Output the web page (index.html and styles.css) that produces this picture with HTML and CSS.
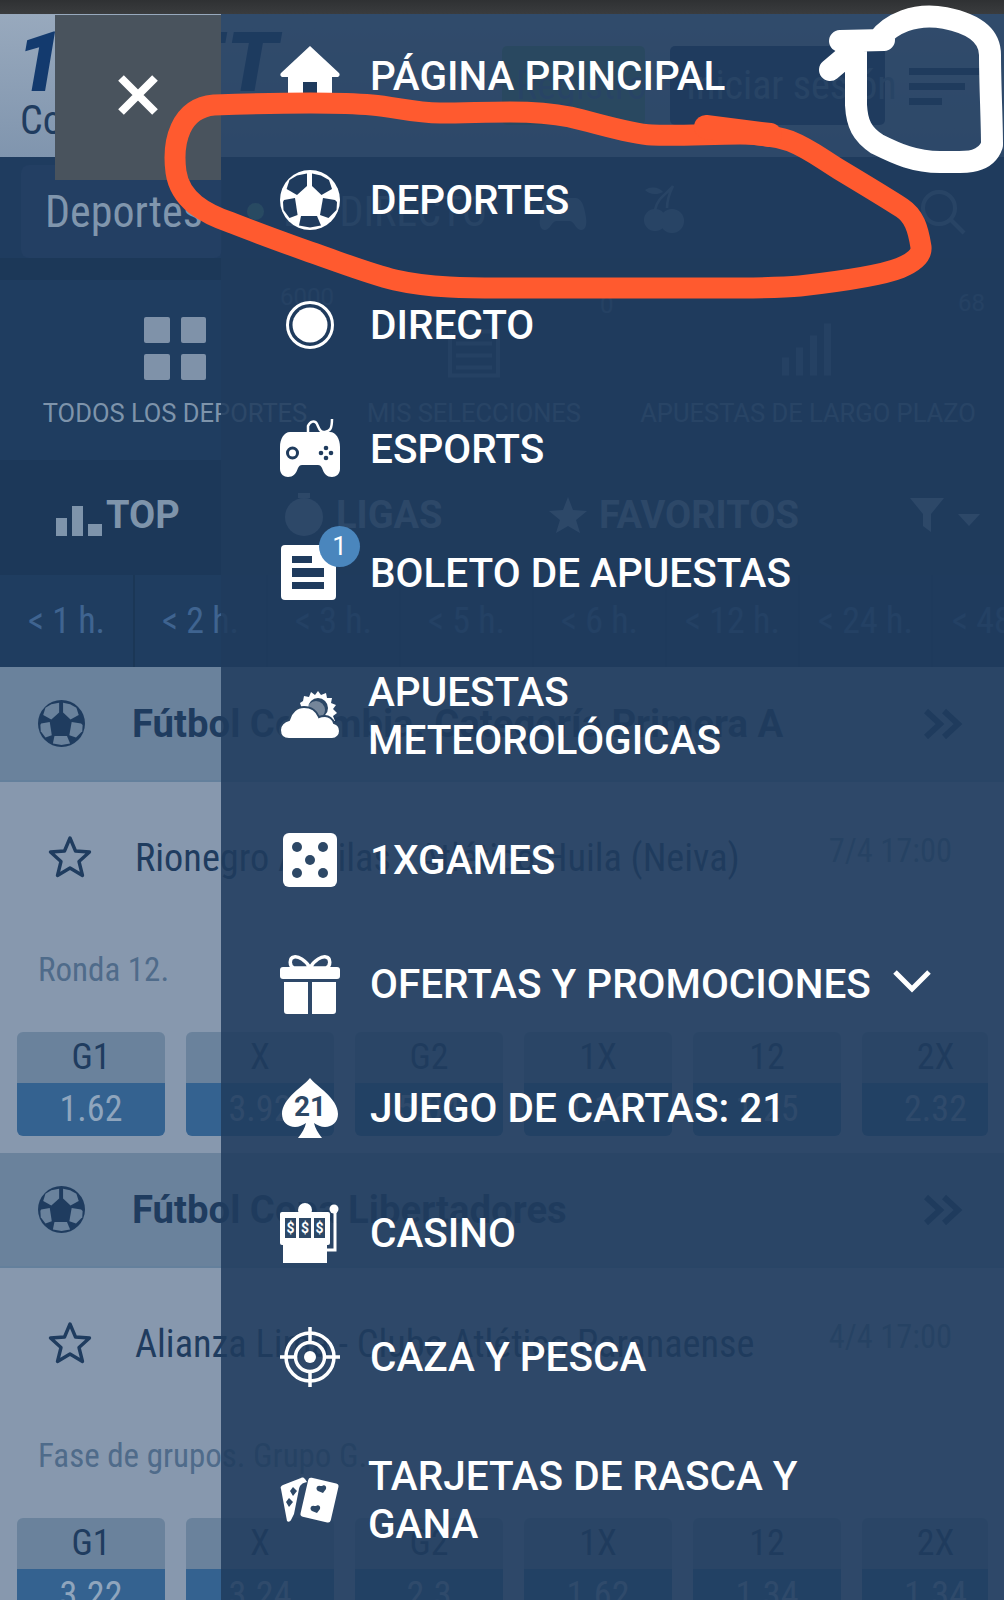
FILE: index.html
```html
<!DOCTYPE html>
<html lang="es">
<head>
<meta charset="utf-8">
<title>1XBET</title>
<link rel="stylesheet" href="styles.css">
</head>
<body>
<svg class="defs" width="0" height="0" aria-hidden="true">
  <symbol id="ball" viewBox="0 0 60 60">
    <circle cx="30" cy="30" r="30" fill="currentColor"/>
    <g class="patch">
      <polygon points="27,3.500 27,16 17,25 6.600,19 9.500,10 17,5.500"/>
      <polygon points="32,3.500 32,16 41.500,25 52,19 49,10 41,5.500"/>
      <polygon points="4,30 15,28 17.600,45 9.500,48 3.500,40 3,32"/>
      <polygon points="55,30 43,28 40,45 48.500,48 56.500,40 57,32"/>
      <polygon points="21,46 37,46 41,55.500 30,57.500 19,55.500"/>
    </g>
  </symbol>
  <symbol id="star" viewBox="0 0 46 44">
    <polygon points="23,3 28.5,16 42.5,17 32,26.5 35.5,40.5 23,33 10.5,40.5 14,26.5 3.5,17 17.5,16" fill="none" stroke="currentColor" stroke-width="3.4" stroke-linejoin="round"/>
  </symbol>
  <symbol id="dbl" viewBox="0 0 40 32">
    <path d="M3 3l14 13L3 29M21 3l14 13-14 13" fill="none" stroke="currentColor" stroke-width="6"/>
  </symbol>
</svg>

<div class="status"></div>

<header class="head">
  <div class="brand">
    <div class="logo">1XBET</div>
    <div class="country cond">Colombia</div>
  </div>
  <div class="btn reg cond">Registro</div>
  <div class="btn login cond">Iniciar sesión</div>
  <div class="burger"><i class="l1"></i><i class="l2"></i><i class="l3"></i></div>
</header>

<nav class="nav">
  <div class="dep cond">Deportes</div>
  <div class="live"><i class="dot"></i><span class="cond">EN DIRECTO</span></div>
  <svg class="n-game" viewBox="0 0 48 36"><path d="M12 2h24c6 0 9 6 11 20 1 8-1 12-5 12-5 0-7-9-11-9H17c-4 0-6 9-11 9-4 0-6-4-5-12C3 8 6 2 12 2z" fill="#5f7a98"/></svg>
  <svg class="n-cherry" viewBox="0 0 42 50"><path d="M30 2C26 10 24 16 24 24M30 2C24 10 14 14 12 26" fill="none" stroke="#5f7a98" stroke-width="2.5"/><path d="M2 6c6-4 14-3 18 2-6 3-13 3-18-2z" fill="#5f7a98"/><circle cx="12" cy="36" r="11" fill="#5f7a98"/><circle cx="29" cy="37" r="12" fill="#5f7a98"/></svg>
  <svg class="n-search" viewBox="0 0 46 46"><circle cx="19" cy="19" r="16" fill="none" stroke="#5f7a98" stroke-width="4"/><path d="M30 30l14 14" stroke="#5f7a98" stroke-width="4"/></svg>
</nav>

<section class="cats">
  <div class="cat c1">
    <div class="grid4"><i></i><i></i><i></i><i></i></div>
    <div class="cat-l">TODOS LOS DEPORTES</div>
    <span class="count n1">6000</span>
  </div>
  <div class="cat c2">
    <svg class="cat-i" viewBox="0 0 60 62"><path d="M6 58V14h48v44zM12 26h36M12 38h36M12 50h36" fill="none" stroke="#4a6685" stroke-width="4"/></svg>
    <div class="cat-l dim">MIS SELECCIONES</div>
    <span class="count n2">0</span>
  </div>
  <div class="cat c3">
    <svg class="cat-i" viewBox="0 0 60 62"><path d="M4 58V40h7v18zM18 58V30h7v28zM32 58V18h7v40zM46 58V6h7v52z" fill="#4a6685"/></svg>
    <div class="cat-l dim">APUESTAS DE LARGO PLAZO</div>
    <span class="count n3">68</span>
  </div>
</section>

<section class="tabs">
  <div class="tab t-top">
    <svg class="bars" viewBox="0 0 46 30"><path d="M0 30V12h11v18zM16 30V0h11v30zM32 30V18h14v12z" fill="currentColor"/></svg>TOP
  </div>
  <div class="tab t-lig">
    <svg class="watch" viewBox="0 0 42 44"><circle cx="21" cy="24" r="19" fill="currentColor"/><rect x="15" y="0" width="12" height="5" fill="currentColor"/></svg>LIGAS
  </div>
  <div class="tab t-fav">
    <svg class="fstar" viewBox="0 0 38 36"><polygon points="19,0 24,13 38,14 27,23 31,36 19,29 7,36 11,23 0,14 14,13" fill="currentColor"/></svg>FAVORITOS
  </div>
  <div class="tab t-fil">
    <svg class="funnel" viewBox="0 0 34 34"><path d="M0 0h34L21 16v18l-8-6V16z" fill="currentColor"/></svg>
    <svg class="caret" viewBox="0 0 22 12"><path d="M0 0h22L11 12z" fill="currentColor"/></svg>
  </div>
</section>

<section class="times cond">
  <div class="time">&lt; 1 h.</div><div class="time">&lt; 2 h.</div><div class="time">&lt; 3 h.</div><div class="time">&lt; 5 h.</div><div class="time">&lt; 6 h.</div><div class="time">&lt; 12 h.</div><div class="time">&lt; 24 h.</div><div class="time">&lt; 48 h.</div>
</section>

<section class="league">
  <svg class="l-ball"><use href="#ball"/></svg>
  <div class="l-name">Fútbol Colombia. Categoría Primera A</div>
  <svg class="l-dbl"><use href="#dbl"/></svg>
</section>
<section class="match">
  <div class="m-top">
    <svg class="m-star"><use href="#star"/></svg>
    <div class="m-name cond">Rionegro Águilas - Atlético Huila (Neiva)</div>
    <div class="m-date cond">7/4 17:00</div>
  </div>
  <div class="m-round cond">Ronda 12.</div>
  <div class="odds cond">
    <div class="odd"><b>G1</b><span>1.62</span></div>
    <div class="odd"><b>X</b><span>3.92</span></div>
    <div class="odd"><b>G2</b><span>5.04</span></div>
    <div class="odd"><b>1X</b><span>1.16</span></div>
    <div class="odd"><b>12</b><span>1.25</span></div>
    <div class="odd"><b>2X</b><span>2.32</span></div>
  </div>
</section>

<section class="league">
  <svg class="l-ball"><use href="#ball"/></svg>
  <div class="l-name">Fútbol Copa Libertadores</div>
  <svg class="l-dbl"><use href="#dbl"/></svg>
</section>
<section class="match">
  <div class="m-top">
    <svg class="m-star"><use href="#star"/></svg>
    <div class="m-name cond">Alianza Lima - Clube Atlético Paranaense</div>
    <div class="m-date cond">4/4 17:00</div>
  </div>
  <div class="m-round cond">Fase de grupos. Grupo G.</div>
  <div class="odds cond">
    <div class="odd"><b>G1</b><span>3.22</span></div>
    <div class="odd"><b>X</b><span>3.24</span></div>
    <div class="odd"><b>G2</b><span>2.3</span></div>
    <div class="odd"><b>1X</b><span>1.62</span></div>
    <div class="odd"><b>12</b><span>1.34</span></div>
    <div class="odd"><b>2X</b><span>1.34</span></div>
  </div>
</section>

<aside class="drawer">
  <div class="item">
    <svg class="ico" viewBox="0 0 60 60"><path d="M30 0L59 27c1.500 2 0 4-2 4h-5v29H8V31H3c-2 0-3.500-2-2-4z" fill="#fff"/><rect x="23" y="36" width="14" height="24" fill="#1f3b5d"/></svg>
    <span>PÁGINA PRINCIPAL</span>
  </div>
  <div class="item">
    <svg class="ico ball"><use href="#ball"/></svg>
    <span>DEPORTES</span>
  </div>
  <div class="item">
    <svg class="ico" viewBox="0 0 60 60"><circle cx="30" cy="30" r="22.500" fill="none" stroke="#fff" stroke-width="3"/><circle cx="30" cy="30" r="17.500" fill="#fff"/></svg>
    <span>DIRECTO</span>
  </div>
  <div class="item">
    <svg class="ico" viewBox="0 0 60 60"><path d="M28 13V7C30 2 35 1 37 5C39 9 40 14 45 13C50 12 52 10 52 0" fill="none" stroke="#fff" stroke-width="2.500"/><path d="M10 13H50C56 13 60 20 60 28V50C60 55 56 58 52 58C47 58 44 55 42 49C41 47 40 46 38 46H22C20 46 19 47 18 49C16 55 13 58 8 58C4 58 0 55 0 50V28C0 20 4 13 10 13Z" fill="#fff"/><circle cx="12.500" cy="34" r="5" fill="none" stroke="#1f3b5d" stroke-width="3"/><g fill="#1f3b5d"><circle cx="46" cy="29" r="2.300"/><circle cx="46" cy="39" r="2.300"/><circle cx="41" cy="34" r="2.300"/><circle cx="51" cy="34" r="2.300"/></g></svg>
    <span>ESPORTS</span>
  </div>
  <div class="item">
    <div class="ticket">
      <svg class="ico" viewBox="0 0 60 60"><rect x="1" y="0" width="55" height="55" rx="4" fill="#fff"/><g fill="#1f3b5d"><rect x="12" y="11" width="20" height="7"/><rect x="12" y="23" width="32" height="9"/><rect x="12" y="37" width="32" height="7"/></g></svg>
      <span class="badge">1</span>
    </div>
    <span>BOLETO DE APUESTAS</span>
  </div>
  <div class="item two">
    <svg class="ico" viewBox="0 0 60 50"><path d="M38 0l3 4 5-2 1 5 5 0-1 5 5 2-3 4 4 4-4 3 2 5H26l-6-18 3-2 1-5 5 1 2-5 4 3z" fill="#fff"/><circle cx="38" cy="17" r="10" fill="#2b4664"/><circle cx="36" cy="19" r="9" fill="#fff" opacity=".35"/><path d="M9 48C3 48 0 44 0 39c0-5 4-9 9-10 2-8 8-13 15-13 8 0 13 5 15 10 2-1 4-1 6-1 4 0 8 3 9 7 4 1 6 4 6 8s-3 8-8 8z" fill="#fff" stroke="#2b4664" stroke-width="2"/></svg>
    <span>APUESTAS<br>METEOROLÓGICAS</span>
  </div>
  <div class="item">
    <svg class="ico" viewBox="0 0 60 60"><rect x="3" y="3" width="54" height="54" rx="6" fill="#fff"/><g fill="#2d4866"><circle cx="17" cy="17" r="5"/><circle cx="43" cy="17" r="5"/><circle cx="30" cy="30" r="5"/><circle cx="17" cy="43" r="5"/><circle cx="43" cy="43" r="5"/></g></svg>
    <span>1XGAMES</span>
  </div>
  <div class="item">
    <svg class="ico" viewBox="0 0 60 60"><path d="M30 14C26 6 18 2 14 3c-5 1-5 9 0 11zM30 14c4-8 12-12 16-11 5 1 5 9 0 11z" fill="none" stroke="#fff" stroke-width="3.500"/><rect x="0" y="13" width="60" height="12" rx="3" fill="#fff"/><path d="M4 28h24v32H7c-2 0-3-1-3-3zM32 28h24v29c0 2-1 3-3 3H32z" fill="#fff"/></svg>
    <span>OFERTAS Y PROMOCIONES</span>
    <svg class="chev" viewBox="0 0 38 24"><path d="M2 3l17 17L36 3" fill="none" stroke="#fff" stroke-width="5"/></svg>
  </div>
  <div class="item">
    <svg class="ico" viewBox="0 0 60 60"><path d="M30 0C36 8 58 20 58 36c0 8-6 13-13 13-4 0-8-2-11-4 1 5 4 10 8 15H18c4-5 7-10 8-15-3 2-7 4-11 4C8 49 2 44 2 36 2 20 24 8 30 0z" fill="#fff"/><text x="30" y="38" class="s21">21</text></svg>
    <span>JUEGO DE CARTAS: 21</span>
  </div>
  <div class="item">
    <svg class="ico" viewBox="0 0 60 60"><circle cx="25" cy="7" r="7" fill="#fff"/><rect x="0" y="9" width="50" height="33" rx="2" fill="#fff"/><rect x="3" y="42" width="44" height="18" fill="#fff"/><g fill="#2d4866"><rect x="5" y="15" width="11" height="20"/><rect x="19" y="15" width="12" height="20"/><rect x="34" y="15" width="11" height="20"/></g><g class="dollar"><text x="10.500" y="30">$</text><text x="25" y="30">$</text><text x="39.500" y="30">$</text></g><circle cx="54" cy="6" r="4.500" fill="#fff"/><path d="M55 8v39H46" fill="none" stroke="#fff" stroke-width="3"/></svg>
    <span>CASINO</span>
  </div>
  <div class="item">
    <svg class="ico" viewBox="0 0 60 60"><g fill="none" stroke="#fff"><circle cx="30" cy="30" r="24" stroke-width="3.500"/><circle cx="30" cy="30" r="14.500" stroke-width="3.500"/><path d="M30 0v17M30 43v17M0 30h17M43 30h17" stroke-width="3.500"/></g><circle cx="30" cy="30" r="6" fill="#fff"/></svg>
    <span>CAZA Y PESCA</span>
  </div>
  <div class="item two">
    <svg class="ico" viewBox="0 0 60 46"><path d="M3 8L21 1c2-1 3 0 4 1l2 3c-5 1-7 3-8 7l-5 25-3 6c-1 2-3 2-4 1L1 12c-1-2 0-3 2-4z" fill="#fff"/><rect x="24" y="3" width="31" height="40" rx="3" transform="rotate(13 39 23)" fill="#fff"/><g fill="#2d4866"><path d="M42 9c2-2 5 0 4 3l-3 4-5-2c-3-2-1-6 2-5z"/><path d="M36 29c2-2 5 0 4 3l-3 4-5-2c-3-2-1-6 2-5z"/><path d="M13 10l4 4-4 5-3-5zM9 21l4 4-4 5-3-5z"/></g></svg>
    <span>TARJETAS DE RASCA Y<br>GANA</span>
  </div>
</aside>

<div class="close">
  <svg class="x" viewBox="0 0 40 40"><path d="M3 3l34 34M37 3L3 37" stroke="#fff" stroke-width="8"/></svg>
</div>

<svg class="marks" viewBox="0 0 1004 1600" width="1004" height="1600">
  <path class="orange" d="M214 105C270 103 340 102 372 105C395 107 415 113 440 113C465 113 485 112 510 112C535 112 550 113 570 117C600 124 630 134 652 135C680 136 710 134 740 134C760 134 775 136 790 141C810 149 822 159 840 170C860 182 885 197 902 208C914 216 918 228 921 247C922 256 912 263 900 268C880 276 835 282 800 286C770 289 720 288 660 288H500C470 288 430 288 395 280C370 274 345 264 310 252C285 243 255 232 232 223C205 214 180 200 176 172C172 142 180 108 214 105Z"/>
  <path class="orange thin" d="M706 127L770 135"/>
  <path class="white" d="M840 41L884 40M830 70L856 48V105C857 124 862 134 877 144C897 154 915 162 940 162C962 162 985 165 992 145C992 120 990 85 990 55C990 36 975 24 945 18C915 12 890 24 878 40"/>
</svg>
</body>
</html>
```
FILE: styles.css
```css
* { box-sizing: border-box; }
html, body { margin: 0; padding: 0; }
body {
  position: relative;
  width: 1004px;
  height: 1600px;
  overflow: hidden;
  background: #8798ae;
  font-family: Roboto, "Noto Sans", sans-serif;
  color: #1f3c5f;
  --patch: #1f3b5d;
}
.defs { position: absolute; }
.patch { fill: var(--patch); }
.cond {
  font-family: "Roboto Condensed", "Liberation Sans Narrow", Roboto, sans-serif;
  font-stretch: condensed;
}

.status { height: 14px; background: linear-gradient(#2f3133, #3a3c3e); }

.head {
  height: 143px;
  display: flex;
  align-items: flex-start;
  overflow: hidden;
  background: linear-gradient(#98a9bd, #8095ae);
}
.brand { width: 502px; padding: 14px 0 0 20px; }
.logo {
  margin-left: -4px;
  font-size: 84px;
  line-height: 70px;
  font-weight: 900;
  font-style: italic;
  color: #133a6e;
  letter-spacing: 3px;
}
.country { font-size: 40px; line-height: 46px; color: #1f3c5f; }
.btn {
  margin-top: 32px;
  height: 79px;
  border-radius: 5px;
  display: flex;
  align-items: center;
  font-size: 40px;
  color: #5f7a98;
}
.reg { width: 143px; padding-left: 14px; background: #669874; }
.login { width: 215px; margin-left: 25px; padding-left: 16px; background: #1f3c66; white-space: nowrap; }
.burger { margin: 54px 0 0 24px; display: flex; flex-direction: column; gap: 8px; }
.burger i { display: block; height: 7px; background: #1f3c5f; }
.l1 { width: 72px; }
.l2 { width: 56px; }
.l3 { width: 33px; }

.nav {
  height: 123px;
  display: flex;
  padding: 8px 0 22px 21px;
  align-items: center;
  background: #1f3c5f;
  box-shadow: inset 0 -22px 0 #1c3858;
}
.dep {
  width: 201px;
  height: 93px;
  padding-left: 24px;
  border-radius: 8px;
  background: #233f63;
  color: #8096ad;
  font-size: 44px;
  display: flex;
  align-items: center;
}
.live { display: flex; align-items: center; width: 317px; padding-left: 25px; gap: 19px; font-size: 42px; color: #5f7a98; }
.dot { width: 17px; height: 17px; border-radius: 50%; background: #5fa080; }
.n-game { width: 48px; height: 36px; margin-top: 4px; }
.n-cherry { width: 42px; height: 50px; margin: -6px 0 0 56px; }
.n-search { width: 46px; height: 46px; margin-left: 235px; }

.cats { height: 180px; display: flex; background: #1f3d60; }
.cat { position: relative; display: flex; flex-direction: column; align-items: center; padding-top: 37px; }
.c1 { width: 350px; }
.c2 { width: 248px; }
.c3 { width: 406px; padding-left: 14px; }
.grid4 { width: 62px; height: 63px; display: grid; grid-template-columns: 1fr 1fr; gap: 11px; }
.grid4 i { border-radius: 2px; background: #7f92a9; }
.cat-i { width: 60px; height: 63px; }
.cat-l { margin-top: 18px; font-size: 25.500px; line-height: 30px; color: #7e94ab; white-space: nowrap; }
.cat-l.dim { color: #5f7a98; }
.count { position: absolute; font-size: 24px; line-height: 28px; color: #4a6685; }
.n1 { top: 3px; left: 280px; }
.n2 { top: 11px; left: 250px; }
.n3 { top: 9px; left: 360px; }

.tabs { height: 115px; padding-bottom: 6px; display: flex; align-items: center; background: #1c3859; color: #7e94ab; font-size: 38px; font-weight: 700; }
.tab { display: flex; align-items: center; }
.t-top { width: 221px; padding-left: 56px; gap: 4px; }
.t-lig { width: 285px; padding-left: 62px; gap: 11px; }
.t-fav { width: 344px; padding-left: 43px; gap: 12px; }
.t-fil { padding-left: 60px; gap: 14px; }
.bars { width: 46px; height: 30px; margin-top: 12px; }
.watch { width: 42px; height: 44px; }
.fstar { width: 38px; height: 36px; }
.funnel { width: 34px; height: 34px; }
.caret { width: 22px; height: 12px; margin-top: 10px; }

.times { height: 92px; display: flex; background: #1f3d60; color: #3f6490; font-size: 36px; }
.time { flex: 0 0 133px; display: flex; align-items: center; justify-content: center; border-right: 2px solid #1b3756; white-space: nowrap; }
.time:first-child { flex-basis: 135px; }
.time:last-child { border-right: 0; }

.league {
  height: 115px;
  display: flex;
  align-items: center;
  padding-left: 38px;
  background: #6a829c;
  border-bottom: 2px solid #64809c;
  --patch: #6a829c;
  color: #1f3c5f;
}
.l-ball { width: 47px; height: 47px; }
.l-name { margin-left: 47px; flex: 1; font-size: 38.300px; font-weight: 700; white-space: nowrap; }
.l-dbl { width: 40px; height: 32px; margin-right: 41px; }

.match { height: 371px; background: #8798ae; }
.m-top { height: 150px; display: flex; align-items: center; padding: 0 52px 0 47px; }
.m-star { width: 46px; height: 44px; color: #1f3c5f; }
.m-name { margin-left: 42px; flex: 1; font-size: 38.300px; white-space: nowrap; color: #1f3c5f; }
.m-date { font-size: 32.500px; color: #4f6b8a; margin-top: -12px; }
.m-round { height: 100px; padding: 19px 0 0 38px; font-size: 33px; line-height: 38px; color: #4f6b8a; }
.odds { display: grid; grid-template-columns: repeat(5, 148px) 126px; gap: 21px; padding-left: 17px; }
.odd { height: 104px; border-radius: 6px; overflow: hidden; text-align: center; font-size: 36px; }
.odd b { display: block; height: 51px; line-height: 51px; font-weight: 400; background: #6a829c; color: #1f3c5f; }
.odd span { display: block; height: 53px; line-height: 53px; background: #346290; color: #8fa5bd; }
.odd:last-child b, .odd:last-child span { padding-left: 21px; }

.drawer {
  position: absolute;
  top: 14px;
  left: 221px;
  right: 0;
  bottom: 0;
  padding-left: 59px;
  background: rgba(31, 59, 93, .86);
  color: #fff;
  font-size: 40.500px;
  font-weight: 500;
  line-height: 48px;
  --patch: #1f3b5d;
}
.item { min-height: 124.300px; display: flex; align-items: center; gap: 30px; white-space: nowrap; }
.item.two { padding: 33px 0; }
.item.two span { margin-left: -2px; }
.ico { width: 60px; height: 60px; flex: none; color: #fff; overflow: visible; }
.ball { color: #fff; }
.ticket { position: relative; width: 60px; height: 60px; flex: none; margin-top: 4px; }
.badge {
  position: absolute;
  top: -19px;
  right: -20px;
  width: 41px;
  height: 41px;
  border-radius: 50%;
  background: #4a86bd;
  color: #fff;
  font-size: 26px;
  font-weight: 400;
  line-height: 41px;
  text-align: center;
}
.chev { width: 38px; height: 24px; margin: -6px 0 0 -8px; }
.s21 { font-size: 28px; font-weight: 700; fill: #2d4866; text-anchor: middle; }
.dollar text { font-size: 14px; font-weight: 700; fill: #fff; text-anchor: middle; }

.close {
  position: absolute;
  top: 15px;
  left: 55px;
  width: 166px;
  height: 165px;
  background: #49535d;
  display: flex;
  align-items: center;
  justify-content: center;
}
.x { width: 40px; height: 40px; margin-top: -6px; }

.marks { position: absolute; top: 0; left: 0; fill: none; stroke-linecap: round; stroke-linejoin: round; }
.orange { stroke: #ff5a2f; stroke-width: 21; }
.orange.thin { stroke-width: 24; }
.white { stroke: #fff; stroke-width: 22; }
```
